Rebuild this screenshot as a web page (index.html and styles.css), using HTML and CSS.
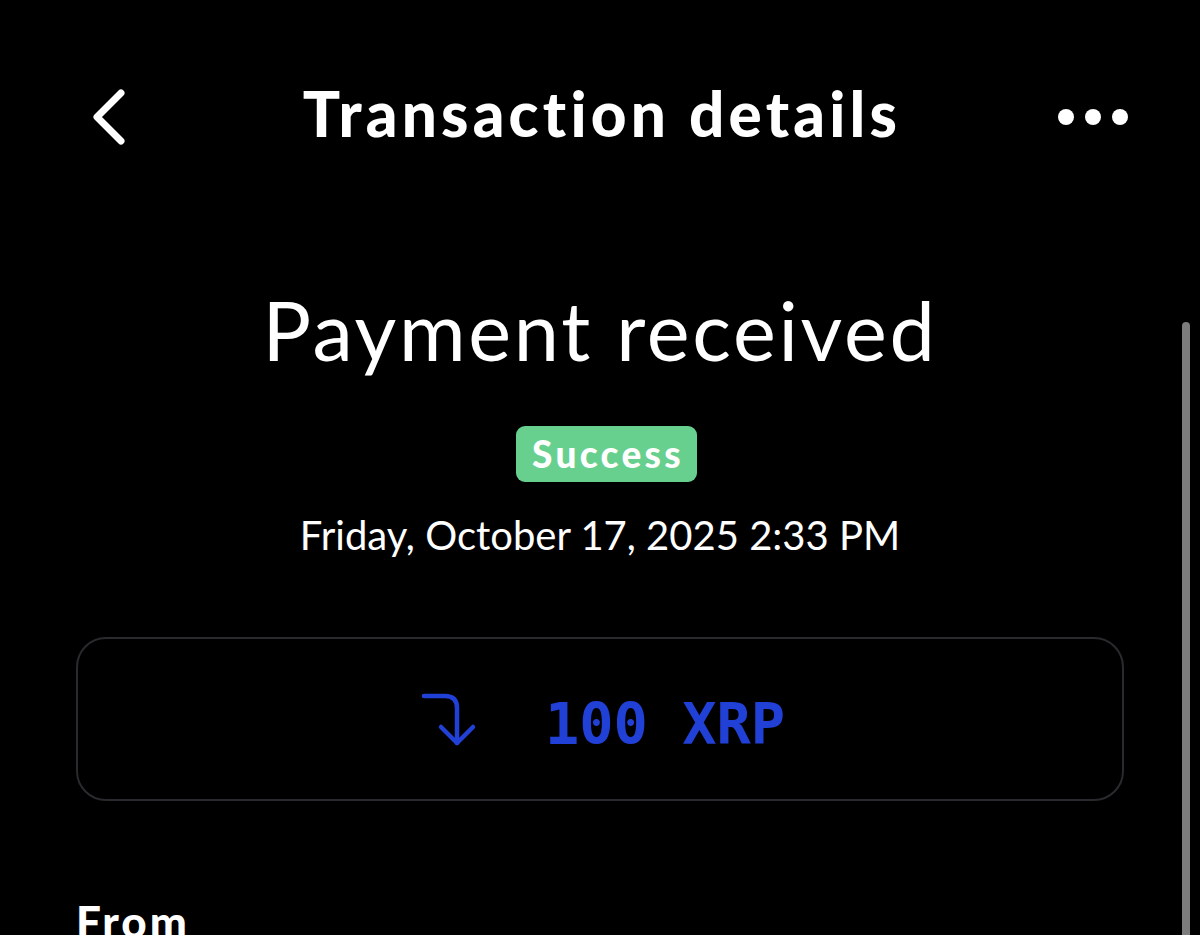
FILE: index.html
```html
<!DOCTYPE html>
<html lang="en">
<head>
    <meta charset="UTF-8">
    <meta name="viewport" content="width=device-width, initial-scale=1.0">
    <title>Transaction details</title>
    <link rel="stylesheet" href="styles.css">
</head>
<body>
    <div class="header">
        <button class="back-btn" aria-label="Back">
            <svg width="36" height="58" viewBox="0 0 36 58">
                <path d="M30 5 L6 29 L30 53" fill="none" stroke="#fff" stroke-width="7" stroke-linecap="round" stroke-linejoin="round"/>
            </svg>
        </button>
        <h1 class="title">Transaction details</h1>
        <button class="more-btn" aria-label="More">
            <span class="dot"></span><span class="dot"></span><span class="dot"></span>
        </button>
    </div>

    <div class="content">
        <h2 class="status-title">Payment received</h2>
        <div class="badge">Success</div>
        <div class="date">Friday, October 17, 2025 2:33 PM</div>

        <div class="amount-card">
            <svg class="amount-icon" width="56" height="56" viewBox="0 0 56 56">
                <path d="M3 5 H24 Q36 5 36 17 V52" fill="none" stroke="#2140d6" stroke-width="4.5" stroke-linecap="round" stroke-linejoin="round"/>
                <path d="M20 36 L36 52 L52 36" fill="none" stroke="#2140d6" stroke-width="4.5" stroke-linecap="round" stroke-linejoin="round"/>
            </svg>
            <span class="amount">100 XRP</span>
        </div>

        <div class="section-label">From</div>
    </div>

    <div class="scrollbar"></div>
</body>
</html>
```

FILE: styles.css
```css
* {
    box-sizing: border-box;
    margin: 0;
    padding: 0;
}
html, body {
    height: 100%;
    overflow: hidden;
}
body {
    background: #000;
    color: #fff;
    font-family: 'Lato', 'Noto Sans', sans-serif;
}
.header {
    display: grid;
    grid-template-columns: 1fr auto 1fr;
    align-items: center;
    height: 182px;
    padding: 52px 72px 0 72px;
}
.back-btn,
.more-btn {
    background: none;
    border: none;
    cursor: pointer;
    display: flex;
    align-items: center;
}
.back-btn {
    justify-self: start;
    margin-left: 19px;
}
.title {
    margin-top: -8px;
    margin-left: 4px;
    font-size: 62px;
    font-weight: 900;
    letter-spacing: 4.2px;
    white-space: nowrap;
}
.more-btn {
    justify-self: end;
    gap: 11px;
}
.dot {
    width: 16px;
    height: 16px;
    border-radius: 50%;
    background: #fff;
}
.content {
    display: flex;
    flex-direction: column;
    align-items: center;
    padding: 0 76px;
}
.status-title {
    margin-top: 107px;
    font-size: 81px;
    font-weight: 400;
    letter-spacing: 2.7px;
    line-height: 1;
}
.badge {
    margin-top: 56px;
    margin-left: 13px;
    background: #68d08f;
    color: #fff;
    font-size: 37px;
    font-weight: 900;
    letter-spacing: 3.3px;
    line-height: 56px;
    height: 56px;
    padding: 0 13px 0 16px;
    border-radius: 9px;
}
.date {
    margin-top: 33px;
    font-size: 40px;
    line-height: 1;
}
.amount-card {
    margin-top: 82px;
    width: 100%;
    height: 164px;
    border: 2px solid #2a2a2e;
    border-radius: 30px;
    display: flex;
    align-items: center;
    justify-content: center;
    gap: 68px;
    padding-left: 6px;
}
.amount {
    margin-top: 10px;
    font-family: 'DejaVu Sans Mono', monospace;
    font-weight: 700;
    font-size: 57px;
    color: #2140d6;
}
.section-label {
    align-self: flex-start;
    margin-top: 94px;
    font-size: 44px;
    font-weight: 900;
    letter-spacing: 3px;
}
.scrollbar {
    position: absolute;
    right: 10px;
    top: 322px;
    bottom: -20px;
    width: 8px;
    border-radius: 4px;
    background: #7d7d7d;
}
```
